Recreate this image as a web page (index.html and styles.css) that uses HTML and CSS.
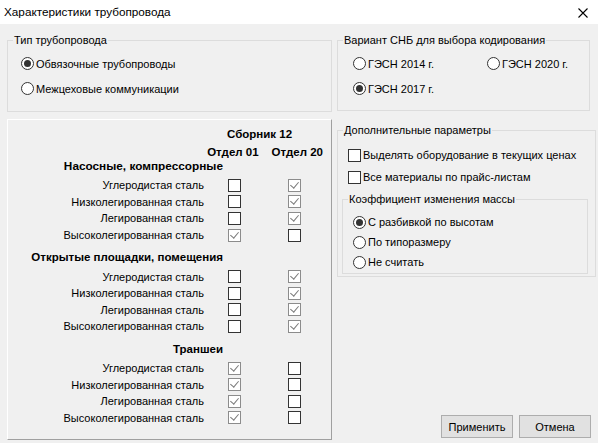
FILE: index.html
```html
<!DOCTYPE html>
<html lang="ru">
<head>
<meta charset="utf-8">
<title>Характеристики трубопровода</title>
<link rel="stylesheet" href="styles.css">
</head>
<body>
<div class="window">
  <div class="titlebar">
    <span class="title">Характеристики трубопровода</span>
    <svg class="close" width="10" height="10" viewBox="0 0 10 10"><path d="M0.5 0.5L9.5 9.5M9.5 0.5L0.5 9.5" stroke="#000" stroke-width="1.1" fill="none"/></svg>
  </div>
  <div class="content">
    <div class="col-left">
      <fieldset class="group g-type">
        <legend>Тип трубопровода</legend>
        <div class="radio-list">
          <label class="opt"><span class="rb on"></span>Обвязочные трубопроводы</label>
          <label class="opt"><span class="rb"></span>Межцеховые коммуникации</label>
        </div>
      </fieldset>
      <div class="panel">
        <div class="h-book">Сборник 12</div>
        <div class="h-dept"><span>Отдел 01</span><span>Отдел 20</span></div>

        <div class="sec-title first">Насосные, компрессорные</div>
        <div class="rows">
          <div class="row"><span class="lbl">Углеродистая сталь</span><span class="cell"><span class="cb"></span></span><span class="cell"><span class="cb on"></span></span></div>
          <div class="row"><span class="lbl">Низколегированная сталь</span><span class="cell"><span class="cb"></span></span><span class="cell"><span class="cb on"></span></span></div>
          <div class="row"><span class="lbl">Легированная сталь</span><span class="cell"><span class="cb"></span></span><span class="cell"><span class="cb on"></span></span></div>
          <div class="row"><span class="lbl">Высоколегированная сталь</span><span class="cell"><span class="cb on"></span></span><span class="cell"><span class="cb"></span></span></div>
        </div>

        <div class="sec-title">Открытые площадки, помещения</div>
        <div class="rows">
          <div class="row"><span class="lbl">Углеродистая сталь</span><span class="cell"><span class="cb"></span></span><span class="cell"><span class="cb on"></span></span></div>
          <div class="row"><span class="lbl">Низколегированная сталь</span><span class="cell"><span class="cb"></span></span><span class="cell"><span class="cb on"></span></span></div>
          <div class="row"><span class="lbl">Легированная сталь</span><span class="cell"><span class="cb"></span></span><span class="cell"><span class="cb on"></span></span></div>
          <div class="row"><span class="lbl">Высоколегированная сталь</span><span class="cell"><span class="cb"></span></span><span class="cell"><span class="cb on"></span></span></div>
        </div>

        <div class="sec-title">Траншеи</div>
        <div class="rows">
          <div class="row"><span class="lbl">Углеродистая сталь</span><span class="cell"><span class="cb on"></span></span><span class="cell"><span class="cb"></span></span></div>
          <div class="row"><span class="lbl">Низколегированная сталь</span><span class="cell"><span class="cb on"></span></span><span class="cell"><span class="cb"></span></span></div>
          <div class="row"><span class="lbl">Легированная сталь</span><span class="cell"><span class="cb on"></span></span><span class="cell"><span class="cb"></span></span></div>
          <div class="row"><span class="lbl">Высоколегированная сталь</span><span class="cell"><span class="cb on"></span></span><span class="cell"><span class="cb"></span></span></div>
        </div>
      </div>
    </div>

    <div class="col-right">
      <fieldset class="group g-variant">
        <legend>Вариант СНБ для выбора кодирования</legend>
        <div class="radio-grid">
          <label class="opt"><span class="rb"></span>ГЭСН 2014 г.</label>
          <label class="opt"><span class="rb"></span>ГЭСН 2020 г.</label>
          <label class="opt"><span class="rb on"></span>ГЭСН 2017 г.</label>
        </div>
      </fieldset>

      <fieldset class="group g-extra">
        <legend>Дополнительные параметры</legend>
        <div class="check-list">
          <label class="opt"><span class="cb"></span>Выделять оборудование в текущих ценах</label>
          <label class="opt"><span class="cb"></span>Все материалы по прайс-листам</label>
        </div>
        <fieldset class="group g-coef">
          <legend>Коэффициент изменения массы</legend>
          <div class="radio-list small">
            <label class="opt"><span class="rb on"></span>С разбивкой по высотам</label>
            <label class="opt"><span class="rb"></span>По типоразмеру</label>
            <label class="opt"><span class="rb"></span>Не считать</label>
          </div>
        </fieldset>
      </fieldset>

      <div class="buttons">
        <button class="btn">Применить</button>
        <button class="btn">Отмена</button>
      </div>
    </div>
  </div>
</div>
</body>
</html>
```

FILE: styles.css
```css
* { box-sizing: border-box; }

html, body {
  margin: 0;
  padding: 0;
}

body {
  width: 598px;
  height: 443px;
  background: #f0f0f0;
  font-family: "Liberation Sans", Arial, sans-serif;
  font-size: 11px;
  color: #000;
  overflow: hidden;
}

.window {
  display: flex;
  flex-direction: column;
  height: 443px;
}

.titlebar {
  height: 24px;
  background: #fff;
  display: flex;
  align-items: center;
  justify-content: space-between;
  padding: 0 10px 0 4px;
  flex: none;
}

.title {
  font-size: 11.75px;
  line-height: 16px;
}

.close {
  display: block;
  margin-top: 1px;
}

.content {
  flex: 1;
  display: flex;
  gap: 5px;
  padding: 9px 0 0 7px;
}

.col-left {
  width: 325px;
  display: flex;
  flex-direction: column;
}

.col-right {
  width: 259px;
  display: flex;
  flex-direction: column;
}

/* group boxes */
.group {
  margin: 0;
  padding: 0;
  border: 1px solid #dcdcdc;
  min-inline-size: 0;
}

.group legend {
  margin-left: 5px;
  padding: 0 1px;
  font-size: 11px;
  line-height: 14px;
}

.g-type {
  height: 79px;
}

.g-variant {
  width: 253px;
  height: 78px;
}

.g-extra {
  margin-top: 12px;
  width: 259px;
  height: 154px;
}

.g-coef {
  margin: 4px 7px 0 4px;
  height: 82px;
}

.opt {
  display: flex;
  align-items: center;
  white-space: nowrap;
  line-height: 14px;
}

.radio-list {
  padding: 4px 0 0 13px;
}

.radio-list .opt {
  height: 25px;
}

.radio-list.small {
  padding: 6px 0 0 10px;
}

.radio-list.small .opt {
  height: 20px;
}

.radio-grid {
  display: grid;
  grid-template-columns: 134px 1fr;
  padding: 4px 0 0 15px;
}

.radio-grid .opt {
  height: 25px;
}

.check-list {
  padding: 7px 0 0 10px;
}

.check-list .opt {
  height: 22px;
}

/* radio */
.rb {
  flex: none;
  position: relative;
  width: 13px;
  height: 13px;
  border: 1px solid #333;
  border-radius: 50%;
  background: #fff;
  margin-right: 2px;
}

.rb.on::after {
  content: "";
  position: absolute;
  left: 2px;
  top: 2px;
  width: 7px;
  height: 7px;
  border-radius: 50%;
  background: #333;
}

/* checkbox */
.cb {
  flex: none;
  display: block;
  position: relative;
  width: 13px;
  height: 13px;
  border: 1px solid #333;
  background: #fff;
}

.opt .cb {
  margin-right: 2px;
}

.cb.on {
  border-color: #8c8c8c;
}

.cb.on::after {
  content: "";
  position: absolute;
  left: 3px;
  top: 0px;
  width: 4px;
  height: 7px;
  border-right: 1px solid #7a7a7a;
  border-bottom: 1px solid #7a7a7a;
  transform: rotate(40deg);
  transform-origin: center;
}

/* panel with table */
.panel {
  margin-top: 7px;
  height: 321px;
  border: 1px solid;
  border-color: #fff #a0a0a0 #a0a0a0 #fff;
  padding-top: 7px;
  font-size: 11px;
}

.h-book {
  font-weight: bold;
  font-size: 11.5px;
  line-height: 14px;
  padding-left: 219px;
}

.h-dept {
  margin-top: 5px;
  line-height: 13px;
  font-weight: bold;
  font-size: 11.5px;
  display: flex;
  justify-content: flex-end;
  gap: 13px;
  padding-right: 8px;
}

.sec-title {
  width: 215px;
  text-align: right;
  font-weight: bold;
  font-size: 11.5px;
  line-height: 14px;
  margin-top: 7px;
}

.sec-title.first {
  margin-top: 0;
  font-size: 11.8px;
}

.rows {
  margin-top: 4px;
}

.row {
  display: grid;
  grid-template-columns: 197px 60px 60px;
  height: 16.6px;
  align-items: center;
}

.lbl {
  text-align: right;
  padding-right: 1px;
  line-height: 14px;
  white-space: nowrap;
}

.cell {
  display: flex;
  padding-left: 23px;
}

/* buttons */
.buttons {
  margin-top: auto;
  margin-bottom: 5px;
  display: flex;
  gap: 6px;
  padding-left: 104px;
}

.btn {
  width: 72px;
  height: 23px;
  padding: 0;
  border: 1px solid #adadad;
  background: #e1e1e1;
  font-family: inherit;
  font-size: 11px;
  color: #000;
}
```
